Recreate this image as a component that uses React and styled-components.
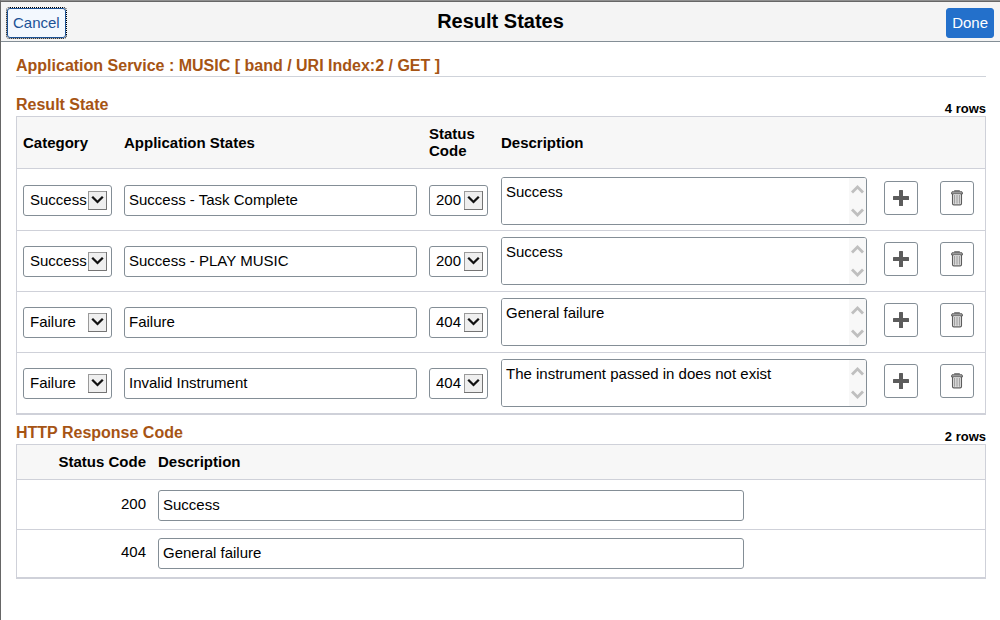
import React from "react";
import styled, { createGlobalStyle } from "styled-components";

const GlobalStyle = createGlobalStyle`
    * {
        box-sizing: border-box;
    }
    body {
        margin: 0;
        background: #fff;
        color: #000;
        font-family: "Liberation Sans", Arial, sans-serif;
        font-size: 15px;
    }
    input, select, textarea, button {
        font: inherit;
        color: inherit;
    }
`

const Modal = styled.div`
    min-height: 100vh;
    border-left: 1px solid #666;
    border-top: 1px solid #8f8f8f;
`

const Header = styled.header`
    display: grid;
    grid-template-columns: 1fr auto 1fr;
    height: 41px;
    padding: 6px 6px 0 6px;
    background: #f4f4f4;
    border-top: 1px solid #666;
    border-bottom: 1px solid #848e96;
`

const Title = styled.h1`
    margin: 0;
    font-size: 20px;
    line-height: 26px;
`

const HeaderButton = styled.button`
    height: 30px;
    padding: 0 5px 2px;
    border: 1px solid ${(props) => (props.$primary ? "#2370cb" : "#1c5295")};
    border-radius: 3px;
    background: ${(props) => (props.$primary ? "#2370cb" : "#f3f8fe")};
    color: ${(props) => (props.$primary ? "#fff" : "#1c5295")};
    outline: ${(props) => (props.$primary ? "none" : "1px dotted #000")};
    justify-self: ${(props) => (props.$primary ? "end" : "start")};
`

const Content = styled.main`
    padding: 14px 14px 0 15px;
`

const PageHeading = styled.h2`
    margin: 0 0 18px;
    color: #a65414;
    font-size: 16px;
    line-height: 20px;
    border-bottom: 1px solid #cfd3da;
`

const GridHeading = styled.div`
    display: flex;
    justify-content: space-between;
    align-items: flex-end;
    height: ${(props) => props.$height}px;
`

const GridTitle = styled.h3`
    margin: 0;
    color: #a65414;
    font-size: 16px;
    line-height: 22px;
`

const RowCount = styled.span`
    font-size: 13px;
    font-weight: bold;
    line-height: 14px;
`

const Table = styled.table`
    width: 100%;
    table-layout: fixed;
    border-collapse: separate;
    border-spacing: 0;
    border: 1px solid #cfd1d9;
    border-bottom-width: 2px;
`

const HeadCell = styled.th`
    width: ${(props) => (props.$width ? props.$width + "px" : "auto")};
    height: ${(props) => props.$height}px;
    padding: 0 6px 1px;
    background: #f7f7f7;
    border-bottom: 1px solid #cfd1d9;
    text-align: ${(props) => props.$align || "left"};
    line-height: 17px;
`

const Cell = styled.td`
    height: ${(props) => props.$height || 61}px;
    padding: ${(props) => props.$top}px 6px 0;
    border-bottom: 1px solid #cfd1d9;
    vertical-align: top;
    text-align: ${(props) => props.$align || "left"};

    tr:first-child > & {
        height: ${(props) => (props.$height || 61) + 1}px;
        padding-top: ${(props) => props.$firstTop || props.$top + 1}px;
    }
    tr:last-child > & {
        border-bottom: none;
        height: ${(props) => props.$lastHeight || 60}px;
    }
`

const TextInput = styled.input`
    display: block;
    width: 100%;
    max-width: ${(props) => (props.$maxWidth ? props.$maxWidth + "px" : "none")};
    height: 31px;
    padding: 0 4px 2px;
    border: 1px solid #848e96;
    border-radius: 3px;
    background: #fff;
`

const SelectBox = styled.div`
    display: grid;
    align-items: center;
    max-width: ${(props) => (props.$maxWidth ? props.$maxWidth + "px" : "none")};

    > * {
        grid-area: 1 / 1;
    }
`

const Select = styled.select`
    appearance: none;
    width: 100%;
    height: 31px;
    padding: 0 0 2px 6px;
    border: 1px solid #848e96;
    border-radius: 3px;
    background: #fff;
`

const SelectArrow = styled.svg`
    justify-self: end;
    margin-right: 5px;
    pointer-events: none;
`

const MemoBox = styled.div`
    display: flex;
    height: 48px;
    border: 1px solid #848e96;
    border-radius: 3px;
    overflow: hidden;
`

const Memo = styled.textarea`
    flex: 1;
    min-width: 0;
    padding: 5px 4px;
    border: none;
    resize: none;
    overflow: hidden;
    line-height: 18px;
`

const ScrollTrack = styled.div`
    display: flex;
    flex-direction: column;
    justify-content: space-between;
    align-items: center;
    width: 17px;
    padding: 7px 0;
    background: #f8f8f8;
`

const IconButton = styled.button`
    display: flex;
    align-items: center;
    justify-content: center;
    width: 34px;
    height: 34px;
    margin: 0 auto;
    padding: 0;
    border: 1px solid #848e96;
    border-radius: 3px;
    background: #fff;
`

const PlusIcon = () => (
    <svg width="16" height="16" viewBox="0 0 16 16" fill="#5c5c5c">
        <rect x="0" y="6" width="16" height="4" rx="0.5" />
        <rect x="6" y="0" width="4" height="16" rx="0.5" />
    </svg>
)

const TrashIcon = () => (
    <svg width="12" height="16" viewBox="0 0 12 16" fill="none" stroke="#5c5c5c">
        <path d="M3.8 1.5V0.9H8.2V1.5" strokeWidth="1.2" />
        <path d="M1 1.8H11L11.6 3.8H0.4Z" fill="#b4b4b4" />
        <path d="M1.6 4V13.4Q1.6 14.8 2.8 14.8H9.2Q10.4 14.8 10.4 13.4V4" strokeWidth="1.3" />
        <path d="M3.8 5V13.8M6 5V13.8M8.2 5V13.8" stroke="#777" />
    </svg>
)

const ScrollChevron = ({ down }) => (
    <svg width="13" height="9" viewBox="0 0 13 9" fill="none" stroke="#bfbfbf" strokeWidth="2.8">
        <path d={down ? "M1 1.5L6.5 7L12 1.5" : "M1 7.5L6.5 2L12 7.5"} />
    </svg>
)

const DropDown = ({ label, value, options, maxWidth }) => (
    <SelectBox $maxWidth={maxWidth}>
        <Select aria-label={label} defaultValue={value}>
            {options.map((option) => (
                <option key={option}>{option}</option>
            ))}
        </Select>
        <SelectArrow width="19" height="19" viewBox="0 0 19 19" fill="none">
            <rect x="0.5" y="0.5" width="18" height="18" fill="#efefef" stroke="#9a9a9a" />
            <path d="M18.5 0V18.5H0" stroke="#747474" />
            <path d="M4.2 5.8L9.5 11L14.8 5.8" stroke="#111" strokeWidth="2.3" />
        </SelectArrow>
    </SelectBox>
)

const resultStates = [
    { category: "Success", state: "Success - Task Complete", code: "200", description: "Success" },
    { category: "Success", state: "Success - PLAY MUSIC", code: "200", description: "Success" },
    { category: "Failure", state: "Failure", code: "404", description: "General failure" },
    { category: "Failure", state: "Invalid Instrument", code: "404", description: "The instrument passed in does not exist" },
]

const responseCodes = [
    { code: "200", description: "Success" },
    { code: "404", description: "General failure" },
]

const ResultRow = ({ category, state, code, description }) => (
    <tr>
        <Cell $top={15}>
            <DropDown label="Category" value={category} options={["Success", "Failure"]} />
        </Cell>
        <Cell $top={15}>
            <TextInput aria-label="Application States" defaultValue={state} />
        </Cell>
        <Cell $top={15}>
            <DropDown label="Status Code" value={code} options={["200", "404"]} maxWidth={59} />
        </Cell>
        <Cell $top={6} $firstTop={8}>
            <MemoBox>
                <Memo aria-label="Description" defaultValue={description} />
                <ScrollTrack>
                    <ScrollChevron />
                    <ScrollChevron down />
                </ScrollTrack>
            </MemoBox>
        </Cell>
        <Cell $top={11}>
            <IconButton type="button" aria-label="Add row"><PlusIcon /></IconButton>
        </Cell>
        <Cell $top={11}>
            <IconButton type="button" aria-label="Delete row"><TrashIcon /></IconButton>
        </Cell>
    </tr>
)

const App = () => {
    return (
        <>
            <GlobalStyle />
            <Modal>
                <Header>
                    <HeaderButton type="button">Cancel</HeaderButton>
                    <Title>Result States</Title>
                    <HeaderButton type="button" $primary>Done</HeaderButton>
                </Header>
                <Content>
                    <PageHeading>Application Service : MUSIC [ band / URI Index:2 / GET ]</PageHeading>

                    <GridHeading $height={21}>
                        <GridTitle>Result State</GridTitle>
                        <RowCount>4 rows</RowCount>
                    </GridHeading>
                    <Table>
                        <thead>
                            <tr>
                                <HeadCell $height={52} $width={101}>Category</HeadCell>
                                <HeadCell $height={52} $width={305}>Application States</HeadCell>
                                <HeadCell $height={52} $width={72}>Status Code</HeadCell>
                                <HeadCell $height={52}>Description</HeadCell>
                                <HeadCell $height={52} $width={56} />
                                <HeadCell $height={52} $width={56} />
                            </tr>
                        </thead>
                        <tbody>
                            {resultStates.map((row) => (
                                <ResultRow key={row.state} {...row} />
                            ))}
                        </tbody>
                    </Table>

                    <GridHeading $height={29}>
                        <GridTitle>HTTP Response Code</GridTitle>
                        <RowCount>2 rows</RowCount>
                    </GridHeading>
                    <Table>
                        <thead>
                            <tr>
                                <HeadCell $height={35} $width={135} $align="right">Status Code</HeadCell>
                                <HeadCell $height={35}>Description</HeadCell>
                            </tr>
                        </thead>
                        <tbody>
                            {responseCodes.map((row) => (
                                <tr key={row.code}>
                                    <Cell $height={49} $lastHeight={47} $top={13} $firstTop={15} $align="right">{row.code}</Cell>
                                    <Cell $height={49} $lastHeight={47} $top={8} $firstTop={10}>
                                        <TextInput aria-label="Description" $maxWidth={586} defaultValue={row.description} />
                                    </Cell>
                                </tr>
                            ))}
                        </tbody>
                    </Table>
                </Content>
            </Modal>
        </>
    )
}

export default App;
